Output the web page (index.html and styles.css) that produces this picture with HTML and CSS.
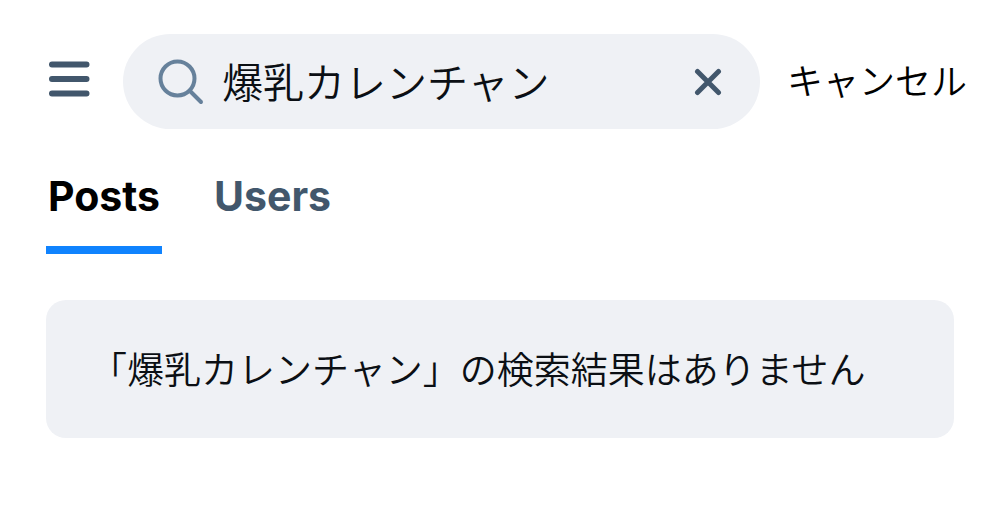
FILE: index.html
```html
<!DOCTYPE html>
<html lang="ja">
<head>
    <meta charset="UTF-8">
    <meta name="viewport" content="width=device-width, initial-scale=1.0">
    <title>Search</title>
    <link rel="stylesheet" href="styles.css">
</head>
<body>
    <header class="search-header">
        <button class="menu-btn" type="button" aria-label="Menu">
            <svg width="42" height="36" viewBox="0 0 42 36" fill="none" stroke="#42576c" stroke-width="6" stroke-linecap="round">
                <path d="M4 3.5h34.5M4 18h34.5M4 32.5h34.5"/>
            </svg>
        </button>
        <form class="search-form" role="search">
            <label class="search-icon" for="searchInput" aria-label="Search">
                <svg width="46" height="46" viewBox="0 0 46 46" fill="none" stroke="#66819b" stroke-width="4" stroke-linecap="round">
                    <circle cx="19.5" cy="19.5" r="17"/>
                    <path d="M32 32L43 43"/>
                </svg>
            </label>
            <input class="search-input" id="searchInput" type="text" value="爆乳カレンチャン">
            <button class="clear-btn" type="reset" aria-label="Clear">
                <svg width="28" height="28" viewBox="0 0 28 28" fill="none" stroke="#42576c" stroke-width="5" stroke-linecap="round">
                    <path d="M3.5 3.5l21 21M24.5 3.5l-21 21"/>
                </svg>
            </button>
        </form>
        <button class="cancel-btn" type="button">キャンセル</button>
    </header>

    <!-- Tabs -->
    <nav class="tabs">
        <a class="tab active" href="#posts">Posts</a>
        <a class="tab" href="#users">Users</a>
    </nav>

    <!-- Results -->
    <main class="results" id="posts">
        <p class="empty-message">「爆乳カレンチャン」の検索結果はありません</p>
    </main>
</body>
</html>
```

FILE: styles.css
```css
* {
    box-sizing: border-box;
}
body {
    margin: 0;
    background: #ffffff;
    color: #0b0f14;
    font-family: Inter, "Noto Sans CJK JP", sans-serif;
}
button {
    padding: 0;
    border: none;
    background: none;
    color: inherit;
    font-family: inherit;
    cursor: pointer;
}
svg {
    display: block;
}
.search-header {
    display: flex;
    align-items: center;
    padding: 34px 33px 0 48px;
}
.menu-btn {
    padding-bottom: 6px;
}
.search-form {
    display: flex;
    flex: 1;
    align-items: center;
    min-width: 0;
    height: 95px;
    margin: 0 27px 0 33px;
    padding: 0 38px 0 35px;
    border-radius: 48px;
    background: #eff1f5;
}
.search-input {
    flex: 1;
    min-width: 0;
    margin: 0 18px;
    padding: 0 0 4px;
    border: none;
    outline: none;
    background: none;
    color: inherit;
    font-family: inherit;
    font-size: 41px;
    font-weight: 350;
}
.cancel-btn {
    padding-bottom: 6px;
    color: #000000;
    font-size: 36px;
    font-weight: 350;
    white-space: nowrap;
}
.tabs {
    display: flex;
    gap: 50px;
    padding: 43px 46px 0;
}
.tab {
    padding: 0 2px 26px;
    border-bottom: 8px solid transparent;
    color: #42576c;
    font-size: 41px;
    font-weight: 700;
    line-height: 48px;
    text-decoration: none;
}
.tab.active {
    border-bottom-color: #1083fe;
    color: #000000;
}
.results {
    margin: 46px;
    padding: 44px 44px 40px;
    border-radius: 20px;
    background: #eff1f5;
}
.empty-message {
    margin: 0;
    font-size: 37px;
    font-weight: 350;
    line-height: 54px;
}
```
